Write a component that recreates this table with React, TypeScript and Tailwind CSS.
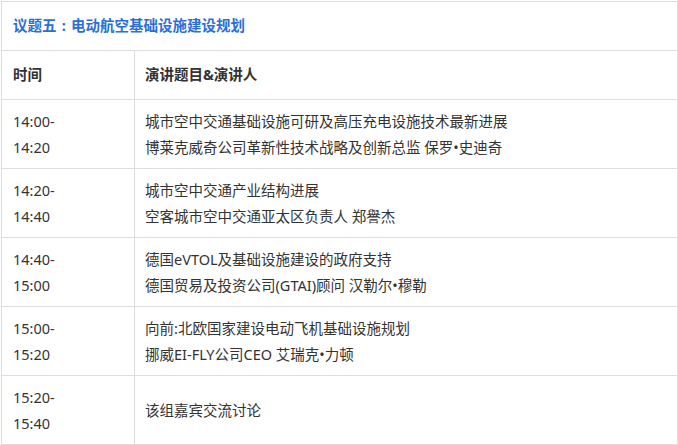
import React from "react";

type Row = { start: string; end: string; lines: string[] };

const rows: Row[] = [
  {
    start: "14:00-",
    end: "14:20",
    lines: ["城市空中交通基础设施可研及高压充电设施技术最新进展", "博莱克威奇公司革新性技术战略及创新总监 保罗•史迪奇"],
  },
  { start: "14:20-", end: "14:40", lines: ["城市空中交通产业结构进展", "空客城市空中交通亚太区负责人 郑譽杰"] },
  { start: "14:40-", end: "15:00", lines: ["德国eVTOL及基础设施建设的政府支持", "德国贸易及投资公司(GTAI)顾问 汉勒尔•穆勒"] },
  { start: "15:00-", end: "15:20", lines: ["向前:北欧国家建设电动飞机基础设施规划", "挪威EI-FLY公司CEO 艾瑞克•力顿"] },
  { start: "15:20-", end: "15:40", lines: ["该组嘉宾交流讨论"] },
];

export default function App() {
  return (
    <div
      className="w-[678px] h-[445px] bg-white pl-[1px] pt-[1px] text-[#333]"
      style={{ fontFamily: '"Noto Sans", "Noto Sans CJK SC", sans-serif' }}
    >
      <table className="w-[677px] border-collapse text-[14.5px]">
        <tbody>
          <tr className="h-[49px]">
            <td colSpan={2} className="border border-[#ddd] pl-[11px] font-bold text-[#2a6fd6] align-middle">
              议题五<span className="inline-block w-[14.5px] text-center">:</span>电动航空基础设施建设规划
            </td>
          </tr>
          <tr className="h-[49px]">
            <td className="w-[133px] border border-[#ddd] pl-[11px] font-bold align-middle">时间</td>
            <td className="border border-[#ddd] pl-[10px] font-bold align-middle">演讲题目&amp;演讲人</td>
          </tr>
          {rows.map((r) => (
            <tr key={r.start} className="h-[69px]">
              <td className="border border-[#ddd] pl-[11px] align-middle leading-[26px]">
                <div>{r.start}</div>
                <div>{r.end}</div>
              </td>
              <td className="border border-[#ddd] pl-[10px] align-middle leading-[26px]">
                {r.lines.map((l) => (
                  <div key={l}>{l}</div>
                ))}
              </td>
            </tr>
          ))}
        </tbody>
      </table>
    </div>
  );
}
